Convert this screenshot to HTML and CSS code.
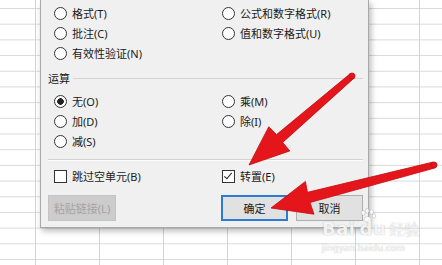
FILE: index.html
```html
<!DOCTYPE html>
<html lang="zh-CN">
<head>
  <meta charset="UTF-8">
  <meta name="viewport" content="width=device-width, initial-scale=1.0">
  <title>选择性粘贴</title>
  <link rel="stylesheet" href="styles.css">
</head>
<body>
  <div class="sheet">
    <div class="dialog">
      <div class="choices">
        <label class="opt"><span class="radio"></span>格式(T)</label>
        <label class="opt"><span class="radio"></span>公式和数字格式(R)</label>
        <label class="opt"><span class="radio"></span>批注(C)</label>
        <label class="opt"><span class="radio"></span>值和数字格式(U)</label>
        <label class="opt"><span class="radio"></span>有效性验证(N)</label>
      </div>

      <div class="group-title"><span>运算</span><i></i></div>

      <div class="choices ops">
        <label class="opt"><span class="radio on"></span>无(O)</label>
        <label class="opt"><span class="radio"></span>乘(M)</label>
        <label class="opt"><span class="radio"></span>加(D)</label>
        <label class="opt"><span class="radio"></span>除(I)</label>
        <label class="opt"><span class="radio"></span>减(S)</label>
      </div>

      <div class="sep"></div>

      <div class="choices checks">
        <label class="opt"><span class="check"></span>跳过空单元(B)</label>
        <label class="opt"><span class="check on"></span>转置(E)</label>
      </div>

      <div class="buttons">
        <button class="btn disabled" disabled>粘贴链接(L)</button>
        <button class="btn primary">确定</button>
        <button class="btn">取消</button>
      </div>
    </div>

    <!-- red arrows drawn over the screenshot -->
    <svg class="arrows" width="442" height="265" viewBox="0 0 442 265">
      <polygon class="arrow" points="249,165 268.8,126.7 276.5,134.6 350.3,73.6 353.7,78.4 282.7,142.4 289.8,150.9"/>
      <circle class="arrow" cx="352" cy="76" r="3"/>
      <polygon class="arrow" points="271,208 305.4,181.4 307.5,192.3 433.2,162 434.8,168 310,202.5 314,214.2"/>
      <circle class="arrow" cx="434" cy="165" r="3"/>
    </svg>

    <div class="watermark">
      <div class="wm-logo">
        <span class="wm-bai">Bai</span>
        <svg class="wm-paw" width="20" height="16" viewBox="0 0 22 20">
          <ellipse cx="5" cy="6" rx="2.4" ry="3"/>
          <ellipse cx="10" cy="3.5" rx="2.4" ry="3"/>
          <ellipse cx="15.5" cy="5" rx="2.4" ry="3"/>
          <ellipse cx="18.5" cy="10" rx="2.2" ry="2.6"/>
          <path d="M6 15 C6 10 14 9 15 14 C16 18 6 19 6 15 Z"/>
        </svg>
        <span class="wm-du">du</span>
        <span class="wm-jy">经验</span>
      </div>
      <div class="wm-url">jingyan.baidu.com</div>
    </div>
  </div>
</body>
</html>
```

FILE: styles.css
```css
body {
  margin: 0;
  font-family: "Noto Sans", "Noto Sans CJK SC", sans-serif;
  font-size: 11px;
  color: #1a1a1a;
}

.sheet {
  position: relative;
  width: 442px;
  height: 265px;
  overflow: hidden;
  background-color: #fff;
  background-image:
    linear-gradient(to right, #cfd4db 1px, transparent 1px),
    linear-gradient(to bottom, #d7d9dc 1px, transparent 1px);
  background-size: 64px 100%, 100% 15.7px;
  background-position: 35px 0, 0 8px;
}

.dialog {
  box-sizing: border-box;
  width: 329px;
  margin-left: 40px;
  padding: 3px 5px 6px 7px;
  background: #f0f0f0;
  border: 1px solid #a9a9a9;
  border-top: none;
  box-shadow: 2px 3px 6px rgba(0, 0, 0, 0.28);
}

.choices {
  display: grid;
  grid-template-columns: 168px 1fr;
  grid-auto-rows: 20px;
  padding-left: 6px;
}

.opt {
  display: flex;
  align-items: center;
  white-space: nowrap;
}

.radio {
  box-sizing: border-box;
  width: 13px;
  height: 13px;
  margin-right: 5px;
  border: 1px solid #333;
  border-radius: 50%;
  background: #fff;
}

.radio.on {
  background: radial-gradient(circle, #222 3px, #fff 3.6px);
}

.check {
  position: relative;
  box-sizing: border-box;
  width: 13px;
  height: 13px;
  margin-right: 5px;
  border: 1px solid #333;
  background: #fff;
}

.check.on::after {
  content: "";
  position: absolute;
  left: 3px;
  top: 0;
  width: 3px;
  height: 7px;
  border-right: 1.5px solid #222;
  border-bottom: 1.5px solid #222;
  transform: rotate(40deg);
}

.group-title {
  display: flex;
  align-items: center;
  height: 20px;
  margin-top: 5px;
}

.group-title i {
  flex: 1;
  height: 1px;
  margin-left: 3px;
  background: #d3d3d3;
}

.ops {
  margin-top: 3px;
}

.sep {
  margin-top: 8px;
  border-top: 1px solid #d3d3d3;
  border-bottom: 1px solid #fbfbfb;
}

.checks {
  margin-top: 5px;
}

.buttons {
  display: flex;
  gap: 8px;
  margin-top: 9px;
}

.btn {
  box-sizing: border-box;
  width: 67px;
  height: 26px;
  padding: 0;
  font-family: inherit;
  font-size: 11px;
  color: #1a1a1a;
  background: #e1e1e1;
  border: 1px solid #adadad;
}

.btn.primary {
  border: 2px solid #2b7cd3;
}

.btn.disabled {
  width: 68px;
  margin-right: auto;
  color: #a3a3a3;
  background: #cccccc;
  border-color: #c4c4c4;
}

.arrows {
  position: absolute;
  left: 0;
  top: 0;
}

.arrow {
  fill: #e5161b;
  stroke: #c20d12;
  stroke-width: 0.8;
  stroke-linejoin: round;
}

.watermark {
  position: absolute;
  left: 322px;
  top: 208px;
  color: rgba(255, 255, 255, 0.9);
  text-shadow: 0 0 1px rgba(90, 90, 90, 0.5);
}

.wm-logo {
  display: flex;
  align-items: flex-end;
  height: 30px;
}

.wm-bai,
.wm-du {
  font-family: "DejaVu Sans", sans-serif;
  font-weight: bold;
  font-size: 18px;
  line-height: 18px;
  letter-spacing: 0.5px;
}

.wm-paw {
  align-self: flex-start;
  margin: 0 -20px 0 2px;
  fill: rgba(255, 255, 255, 0.9);
  stroke: rgba(110, 110, 110, 0.5);
  stroke-width: 0.6;
}

.wm-du {
  margin-left: 2px;
}

.wm-jy {
  margin-left: 3px;
  font-family: "Noto Sans CJK SC", sans-serif;
  font-size: 15px;
  line-height: 18px;
}

.wm-url {
  margin-top: 3px;
  font-size: 9px;
  letter-spacing: 0.3px;
}
```
